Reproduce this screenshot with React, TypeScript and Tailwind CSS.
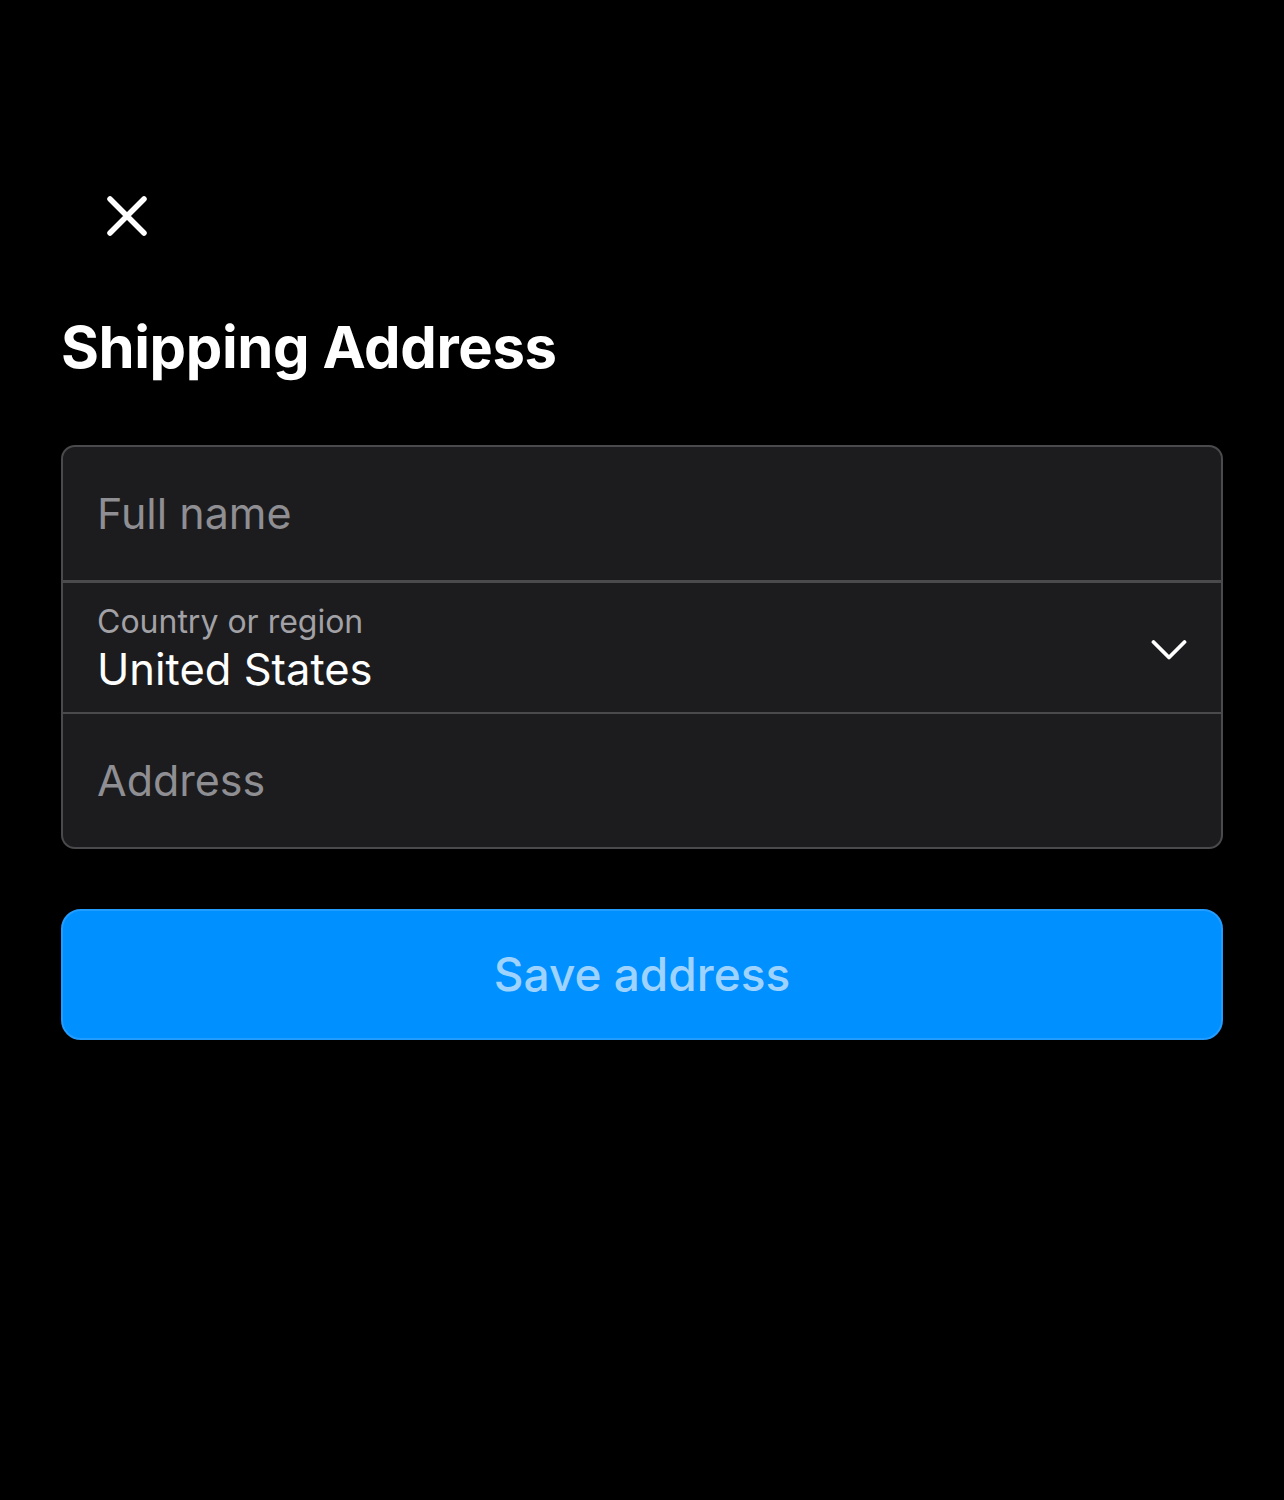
import React from "react";

const font = { fontFamily: "Inter, 'Noto Sans', sans-serif" };

const CloseIcon = () => (
    <svg width="42" height="42" viewBox="0 0 42 42" fill="none">
        <path d="M4 4L38 38M38 4L4 38" stroke="white" strokeWidth="5.5" strokeLinecap="round" />
    </svg>
);

const Chevron = () => (
    <svg width="36" height="22" viewBox="0 0 36 22" fill="none">
        <path d="M2.5 3L18 18.5L33.5 3" stroke="white" strokeWidth="3.8" strokeLinecap="round" strokeLinejoin="round" />
    </svg>
);

export default function App() {
    return (
        <div className="min-h-[1500px] w-full bg-black text-white" style={font}>
            <div className="px-[61px] pt-[194px]">
                <button className="ml-[44px] flex h-[44px] w-[44px] items-center justify-center">
                    <CloseIcon />
                </button>

                <h1 className="mt-[80px] text-[58px] font-bold leading-none tracking-[-0.4px]">
                    Shipping Address
                </h1>

                <div className="mt-[69px] overflow-hidden rounded-[14px] border-[2.5px] border-[#4a4a4c] bg-[#1c1c1e]">
                    <div className="flex h-[133px] items-center px-[34px] text-[43px] text-[#8e8e93]">
                        Full name
                    </div>
                    <div className="h-[2.5px] bg-[#4a4a4c]" />
                    <div className="flex h-[129px] items-center justify-between pl-[34px] pr-[34px]">
                        <div className="flex flex-col pt-[6px]">
                            <span className="text-[32px] leading-[38px] text-[#a1a1a6]">Country or region</span>
                            <span className="text-[43.5px] leading-[56px] text-white">United States</span>
                        </div>
                        <div className="pt-[6px]">
                            <Chevron />
                        </div>
                    </div>
                    <div className="h-[2.5px] bg-[#4a4a4c]" />
                    <div className="flex h-[133px] items-center px-[34px] text-[43px] text-[#8e8e93]">
                        Address
                    </div>
                </div>

                <button className="mt-[60px] flex h-[131px] w-full items-center justify-center rounded-[20px] border-[2.5px] border-[#239cff] bg-[#0090ff] text-[46px] font-medium text-[#9fd3ff]">
                    Save address
                </button>
            </div>
        </div>
    );
}
